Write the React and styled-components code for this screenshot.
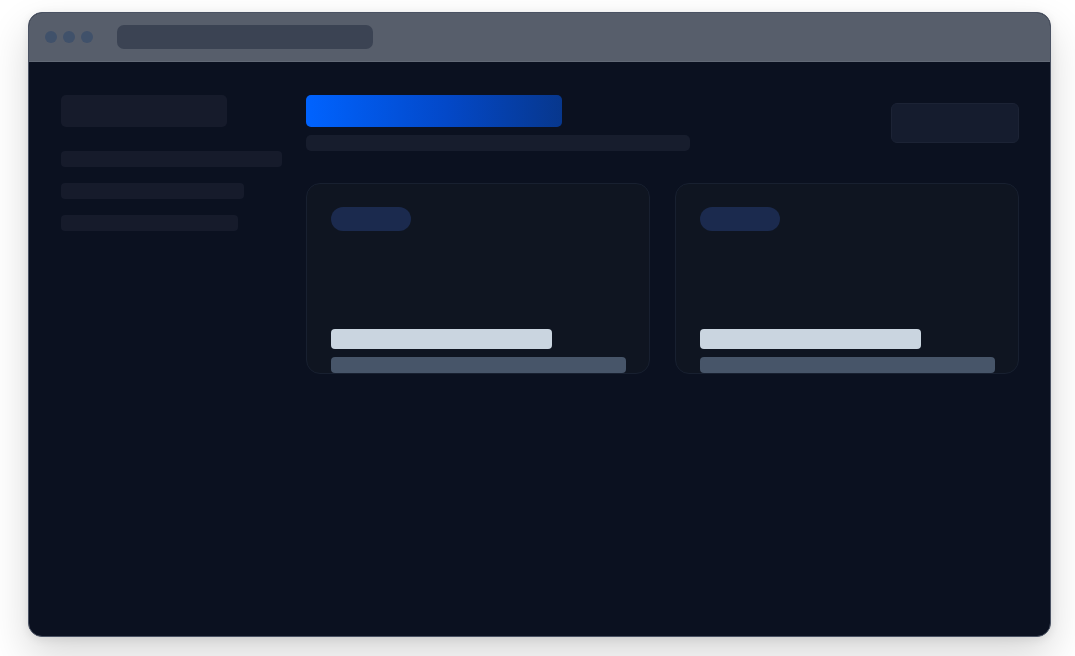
import React from 'react';
import styled, { createGlobalStyle } from 'styled-components';

const GlobalStyle = createGlobalStyle`
  html, body {
    margin: 0;
    padding: 0;
    background: #ffffff;
    font-family: "Inter", "Liberation Sans", sans-serif;
  }
`;

const Page = styled.div`
  width: 1075px;
  height: 656px;
  padding: 12px 0 0 28px;
  box-sizing: border-box;
`;

const Window = styled.div`
  width: 1023px;
  height: 625px;
  box-sizing: border-box;
  border: 1px solid #4a5263;
  border-radius: 14px;
  overflow: hidden;
  background: #0b1120;
  box-shadow: 0 18px 40px rgba(0, 0, 0, 0.16), 0 2px 10px rgba(0, 0, 0, 0.08);
  display: flex;
  flex-direction: column;
`;

const TitleBar = styled.div`
  height: 49px;
  flex-shrink: 0;
  box-sizing: border-box;
  background: #575e6b;
  border-bottom: 1px solid #636a77;
  display: flex;
  align-items: center;
  padding: 0 16px;
  gap: 24px;
`;

const Dots = styled.div`
  display: flex;
  gap: 6px;
`;

const Dot = styled.span`
  width: 12px;
  height: 12px;
  border-radius: 50%;
  background: #40516a;
`;

const AddressBar = styled.div`
  width: 256px;
  height: 24px;
  border-radius: 7px;
  background: #3b4353;
`;

const Body = styled.div`
  flex: 1;
  display: grid;
  grid-template-columns: 221px 1fr;
  gap: 24px;
  padding: 33px 32px 0 32px;
  align-items: start;
`;

const Sidebar = styled.aside`
  display: flex;
  flex-direction: column;
`;

const Skeleton = styled.div`
  width: ${p => p.$w};
  height: ${p => p.$h}px;
  border-radius: ${p => p.$r || 5}px;
  background: ${p => p.$bg || '#161b2b'};
  margin-bottom: ${p => p.$mb || 0}px;
`;

const Main = styled.main`
  display: flex;
  flex-direction: column;
  gap: 32px;
`;

const Header = styled.div`
  display: flex;
  justify-content: space-between;
  align-items: center;
`;

const HeadingGroup = styled.div`
  display: flex;
  flex-direction: column;
  gap: 8px;
`;

const Title = styled.div`
  width: 256px;
  height: 32px;
  border-radius: 5px;
  background: linear-gradient(90deg, #0063ff 0%, #0348c8 55%, #07378d 100%);
`;

const Subtitle = styled.div`
  width: 384px;
  height: 16px;
  border-radius: 5px;
  background: #171d2d;
`;

const ActionButton = styled.div`
  width: 128px;
  height: 40px;
  box-sizing: border-box;
  border-radius: 6px;
  background: #151c2e;
  border: 1px solid #1c2335;
`;

const Cards = styled.div`
  display: grid;
  grid-template-columns: 344px 344px;
  gap: 25px;
`;

const Card = styled.div`
  height: 191px;
  box-sizing: border-box;
  border: 1px solid #182030;
  border-radius: 14px;
  background: #0f1521;
  padding: 23px 23px 0 24px;
  overflow: hidden;
  display: flex;
  flex-direction: column;
`;

const Pill = styled.div`
  width: 80px;
  height: 24px;
  border-radius: 12px;
  background: #1b2a4e;
`;

const CardFooter = styled.div`
  margin-top: auto;
  display: flex;
  flex-direction: column;
  gap: 8px;
`;

const CardTitle = styled.div`
  width: 75%;
  height: 20px;
  border-radius: 4px;
  background: #cad5e0;
`;

const CardMeta = styled.div`
  width: 100%;
  height: 16px;
  border-radius: 4px;
  background: #475569;
`;

const sideLines = ['100%', '83%', '80%'];

function ProjectCard() {
  return (
    <Card>
      <Pill />
      <CardFooter>
        <CardTitle />
        <CardMeta />
      </CardFooter>
    </Card>
  );
}

export default function App() {
  return (
    <>
      <GlobalStyle />
      <Page>
        <Window>
          <TitleBar>
            <Dots>
              <Dot />
              <Dot />
              <Dot />
            </Dots>
            <AddressBar />
          </TitleBar>
          <Body>
            <Sidebar>
              <Skeleton $w="166px" $h={32} $mb={24} />
              {sideLines.map((w, i) => (
                <Skeleton key={i} $w={w} $h={16} $r={4} $mb={16} />
              ))}
            </Sidebar>
            <Main>
              <Header>
                <HeadingGroup>
                  <Title />
                  <Subtitle />
                </HeadingGroup>
                <ActionButton />
              </Header>
              <Cards>
                <ProjectCard />
                <ProjectCard />
              </Cards>
            </Main>
          </Body>
        </Window>
      </Page>
    </>
  );
}
